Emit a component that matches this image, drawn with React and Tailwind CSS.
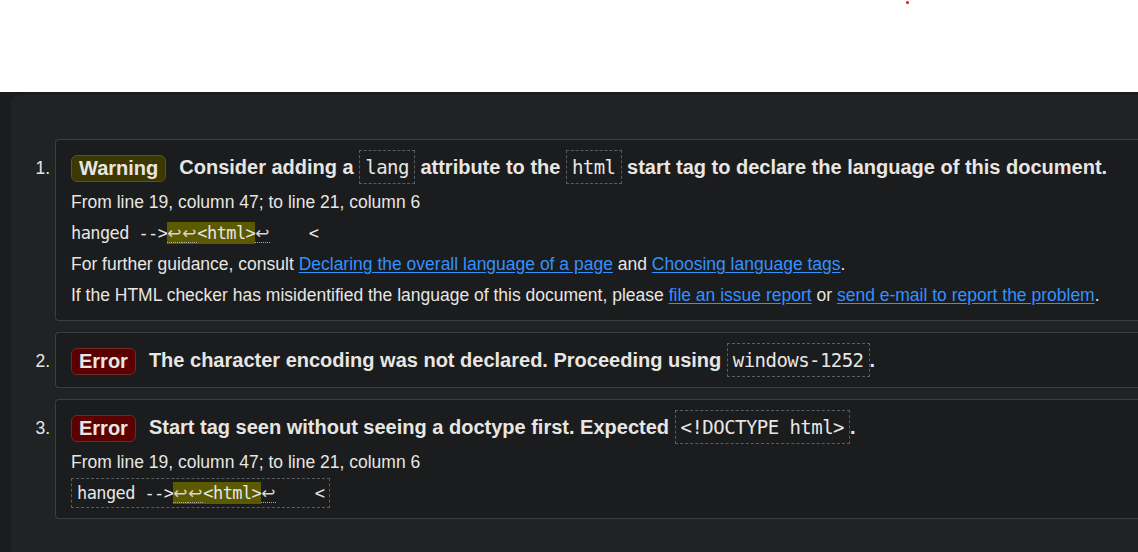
import React from 'react';

const mono = { fontFamily: '"DejaVu Sans Mono", "Liberation Mono", monospace' };
const sym = { fontFamily: '"DejaVu Sans", sans-serif', fontSize: '17px' };

function Badge({ kind }) {
  const warn = kind === 'Warning';
  return (
    <span
      className={`inline-block align-middle rounded-[6px] border px-[7px] py-0 leading-[25px] font-bold text-[20px] mr-[13px] ${
        warn ? 'bg-[#3b3800] border-[#57542c]' : 'bg-[#5a0000] border-[#6e2a2a]'
      }`}
    >
      {kind}
    </span>
  );
}

function Code({ children }) {
  return (
    <code
      style={mono}
      className="border border-dashed border-[#5a5e61] px-[5px] py-[5px] text-[19px] tracking-[-0.55px] leading-none font-normal text-[#e8e6e3]"
    >
      {children}
    </code>
  );
}

function Extract({ boxed }) {
  const arrow = 'inline-block w-[15px] text-[#d8d4cf] border-b border-dotted border-[#b0aca6] leading-[18px]';
  return (
    <div className="leading-[31px]">
      <code
        style={mono}
        className={`whitespace-pre text-[17px] tracking-[-0.6px] leading-none py-[4px] ${
          boxed ? 'border border-dashed border-[#5a5e61] px-[5px]' : ''
        }`}
      >
        {'hanged -->'}
        <span className="bg-[#5c5a00] py-[1px]">
          <span className={arrow} style={sym}>↩</span>
          <span className={arrow} style={sym}>↩</span>
          {'<html>'}
        </span>
        <span className={arrow} style={sym}>↩</span>
        {'    <'}
      </code>
    </div>
  );
}

function Link({ children }) {
  return <a className="text-[#3391ff] underline underline-offset-[2px]">{children}</a>;
}

function Item({ n, kind, children, body }) {
  return (
    <li className="flex items-baseline">
      <span className="w-[44px] shrink-0 text-right pr-[5px] text-[17.5px]">{n}.</span>
      <div className={`flex-1 bg-[#1a1c1d] border border-[#3b3f42] border-r-0 rounded-l-[4px] pl-[15px] pt-[13px] ${body ? 'pb-[9px]' : 'pb-[13px]'}`}>
        <p className="h-[28px] leading-[28px] font-bold text-[20px] whitespace-nowrap">
          <Badge kind={kind} />
          {children}
        </p>
        {body && <div className="mt-[6px] text-[17.5px]">{body}</div>}
      </div>
    </li>
  );
}

export default function App() {
  return (
    <div
      className="w-[1138px] h-[552px] overflow-hidden bg-white text-[#e8e6e3]"
      style={{ fontFamily: '"Liberation Sans", Arial, sans-serif' }}
    >
      <div className="h-[92px] relative">
        <span className="absolute left-[906px] top-[1px] w-[3px] h-[3px] rounded-full bg-[#e3121e]" />
      </div>
      <div className="h-[460px] bg-[#1a1c1d] pl-[11px] pt-[3px]">
        <div className="h-full bg-[#202324] rounded-tl-[8px] pt-[44px]">
          <ol className="flex flex-col gap-[11px]">
            <Item
              n={1}
              kind="Warning"
              body={
                <>
                  <div className="leading-[31px]">From line 19, column 47; to line 21, column 6</div>
                  <Extract />
                  <div className="leading-[31px]">
                    For further guidance, consult <Link>Declaring the overall language of a page</Link> and{' '}
                    <Link>Choosing language tags</Link>.
                  </div>
                  <div className="leading-[31px]">
                    If the HTML checker has misidentified the language of this document, please{' '}
                    <Link>file an issue report</Link> or <Link>send e-mail to report the problem</Link>.
                  </div>
                </>
              }
            >
              Consider adding a <Code>lang</Code> attribute to the <Code>html</Code> start tag to declare the
              language of this document.
            </Item>
            <Item n={2} kind="Error">
              The character encoding was not declared. Proceeding using <Code>windows-1252</Code>.
            </Item>
            <Item
              n={3}
              kind="Error"
              body={
                <>
                  <div className="leading-[31px]">From line 19, column 47; to line 21, column 6</div>
                  <Extract boxed />
                </>
              }
            >
              Start tag seen without seeing a doctype first. Expected <Code>{'<!DOCTYPE html>'}</Code>.
            </Item>
          </ol>
        </div>
      </div>
    </div>
  );
}
